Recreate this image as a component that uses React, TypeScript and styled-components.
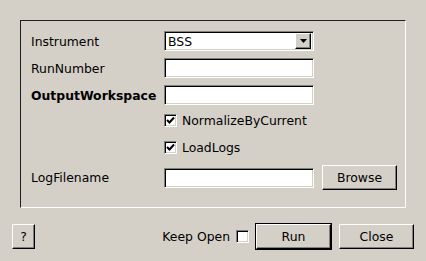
import React from 'react';
import styled, { createGlobalStyle, css } from 'styled-components';

const GlobalStyle = createGlobalStyle`
  html, body {
    margin: 0;
    padding: 0;
    background: #d4d0c8;
  }
  body {
    font-family: "DejaVu Sans", "Liberation Sans", sans-serif;
    font-size: 12.4px;
    color: #000;
  }
`;

const sunken = css`
  border: 1px solid;
  border-color: #808080 #ffffff #ffffff #808080;
  box-shadow: inset 1px 1px #000, inset -1px -1px #d4d0c8;
  background: #fff;
  box-sizing: border-box;
`;

const raised = css`
  border: 1px solid;
  border-color: #ffffff #000 #000 #ffffff;
  box-shadow: inset -1px -1px #808080;
  background: #d4d0c8;
  box-sizing: border-box;
`;

const Window = styled.div`
  width: 426px;
  height: 261px;
  background: #d4d0c8;
  padding-top: 20px;
  box-sizing: border-box;
`;

const Frame = styled.div`
  margin-left: 20px;
  width: 386px;
  box-sizing: border-box;
  border: 1px solid;
  border-color: #202020 #ffffff #ffffff #202020;
  padding: 10px 0 17px 10px;
  display: grid;
  grid-template-columns: 125px 150px 75px;
  grid-template-rows: 20px 20px 20px 17px 22px 25px;
  column-gap: 8px;
  row-gap: 7px;
  align-items: center;
`;

const Label = styled.div<{ $bold?: boolean }>`
  grid-column: 1;
  font-weight: ${(p) => (p.$bold ? 'bold' : 'normal')};
  white-space: nowrap;
`;

const Field = styled.div`
  ${sunken};
  grid-column: 2;
  height: 20px;
  display: flex;
  align-items: center;
  padding: 0 3px;
`;

const Combo = styled(Field)`
  padding: 2px 2px 2px 3px;
  justify-content: space-between;
`;

const ArrowButton = styled.div`
  ${raised};
  width: 16px;
  height: 16px;
  display: flex;
  align-items: center;
  justify-content: center;
`;

const CheckRow = styled.label`
  grid-column: 2 / span 2;
  display: flex;
  align-items: center;
  gap: 5px;
  white-space: nowrap;
`;

const Box = styled.span`
  ${sunken};
  width: 13px;
  height: 13px;
  display: inline-flex;
  align-items: center;
  justify-content: center;
  flex: none;
`;

const Button = styled.div<{ $w: number; $h?: number }>`
  ${raised};
  width: ${(p) => p.$w}px;
  height: ${(p) => p.$h ?? 25}px;
  display: flex;
  align-items: center;
  justify-content: center;
`;

const DefaultButton = styled.div`
  border: 1px solid #000;
  box-sizing: border-box;
  width: 77px;
  height: 27px;
  display: flex;
`;

const Footer = styled.div`
  margin-top: 15px;
  height: 27px;
  padding: 0 12px;
  display: flex;
  align-items: center;
`;

const Spacer = styled.div`
  flex: 1;
`;

const KeepOpen = styled.label`
  display: flex;
  align-items: center;
  gap: 6px;
  margin-right: 6px;
`;

const Tick = () => (
  <svg width="9" height="9" viewBox="0 0 9 9">
    <path d="M1 4 L3.5 6.5 L8 1.5" fill="none" stroke="#000" strokeWidth="2" />
  </svg>
);

const Arrow = () => (
  <svg width="7" height="4" viewBox="0 0 7 4">
    <path d="M0 0 H7 L3.5 4 Z" fill="#000" />
  </svg>
);

const Check = ({ checked }: { checked?: boolean }) => <Box>{checked && <Tick />}</Box>;

export default function App() {
  return (
    <>
      <GlobalStyle />
      <Window>
        <Frame>
          <Label>Instrument</Label>
          <Combo>
            <span>BSS</span>
            <ArrowButton>
              <Arrow />
            </ArrowButton>
          </Combo>
          <span />

          <Label>RunNumber</Label>
          <Field />
          <span />

          <Label $bold>OutputWorkspace</Label>
          <Field />
          <span />

          <CheckRow>
            <Check checked />
            NormalizeByCurrent
          </CheckRow>

          <CheckRow>
            <Check checked />
            LoadLogs
          </CheckRow>

          <Label>LogFilename</Label>
          <Field />
          <Button $w={75}>Browse</Button>
        </Frame>
        <Footer>
          <Button $w={23}>?</Button>
          <Spacer />
          <KeepOpen>
            Keep Open
            <Check />
          </KeepOpen>
          <DefaultButton>
            <Button $w={75}>Run</Button>
          </DefaultButton>
          <Button $w={75} style={{ marginLeft: 7 }}>
            Close
          </Button>
        </Footer>
      </Window>
    </>
  );
}
